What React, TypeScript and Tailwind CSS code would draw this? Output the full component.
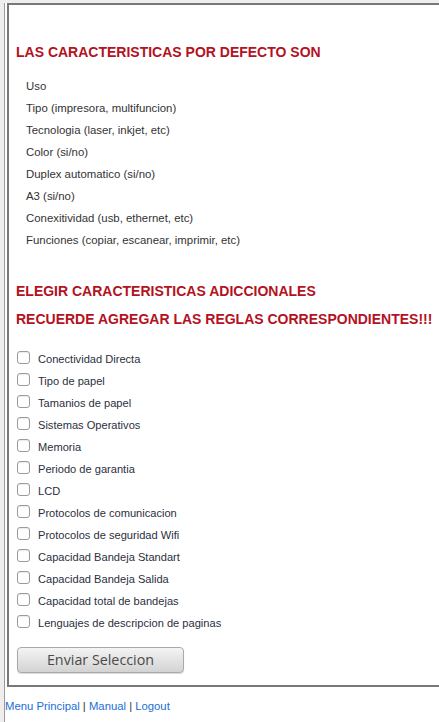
const defaults = [
  "Uso",
  "Tipo (impresora, multifuncion)",
  "Tecnologia (laser, inkjet, etc)",
  "Color (si/no)",
  "Duplex automatico (si/no)",
  "A3 (si/no)",
  "Conexitividad (usb, ethernet, etc)",
  "Funciones (copiar, escanear, imprimir, etc)",
];

const extras = [
  "Conectividad Directa",
  "Tipo de papel",
  "Tamanios de papel",
  "Sistemas Operativos",
  "Memoria",
  "Periodo de garantia",
  "LCD",
  "Protocolos de comunicacion",
  "Protocolos de seguridad Wifi",
  "Capacidad Bandeja Standart",
  "Capacidad Bandeja Salida",
  "Capacidad total de bandejas",
  "Lenguajes de descripcion de paginas",
];

const App = () => {
  return (
    <div className="w-[439px] h-[722px] overflow-hidden bg-[#efeeec] pl-[4px] font-['Liberation_Sans',Arial,sans-serif]">
      <div className="h-full border-l border-[#9a9a9a] bg-white">
        <div className="w-[460px] mt-[3px] ml-[2px] border-2 border-[#787878] pl-[7px] pt-[39px] pb-[12px]">
          <h2 className="text-[14px] leading-[16px] font-bold text-[#b3121e]">
            LAS CARACTERISTICAS POR DEFECTO SON
          </h2>
          <ul className="mt-[15px] pl-[10px]">
            {defaults.map((d) => (
              <li key={d} className="text-[11.4px] leading-[22px] text-[#333]">
                {d}
              </li>
            ))}
          </ul>
          <h2 className="mt-[32px] text-[14px] leading-[16px] font-bold text-[#b3121e]">
            ELEGIR CARACTERISTICAS ADICCIONALES
          </h2>
          <h2 className="mt-[12px] text-[14px] leading-[16px] font-bold text-[#b3121e]">
            RECUERDE AGREGAR LAS REGLAS CORRESPONDIENTES!!!
          </h2>
          <div className="mt-[21px] pl-[1px]">
            {extras.map((e) => (
              <label key={e} className="flex items-center h-[22px] text-[11.1px] text-[#2b2f3d]">
                <span className="w-[13px] h-[13px] rounded-[3px] border border-[#9b9b9b] bg-white shadow-[inset_0_1px_1px_rgba(0,0,0,0.08)] mb-[3px]"></span>
                <span className="ml-[8px]">{e}</span>
              </label>
            ))}
          </div>
          <button
            type="button"
            className="mt-[13px] ml-[1px] w-[167px] h-[26px] rounded-[4px] border border-[#a9a9a9] bg-gradient-to-b from-[#f4f4f4] to-[#d3d3d3] text-[14.3px] text-[#4a4a4a] font-['Open_Sans',sans-serif] shadow-[0_1px_1px_rgba(0,0,0,0.15)]"
          >
            Enviar Seleccion
          </button>
        </div>
        <div className="mt-[12px] text-[11.3px] leading-[14px] text-[#333]">
          <a href="#" className="text-[#1a6fd6]">Menu Principal</a> |{" "}
          <a href="#" className="text-[#1a6fd6]">Manual</a> |{" "}
          <a href="#" className="text-[#1a6fd6]">Logout</a>
        </div>
      </div>
    </div>
  );
};

export default App;
